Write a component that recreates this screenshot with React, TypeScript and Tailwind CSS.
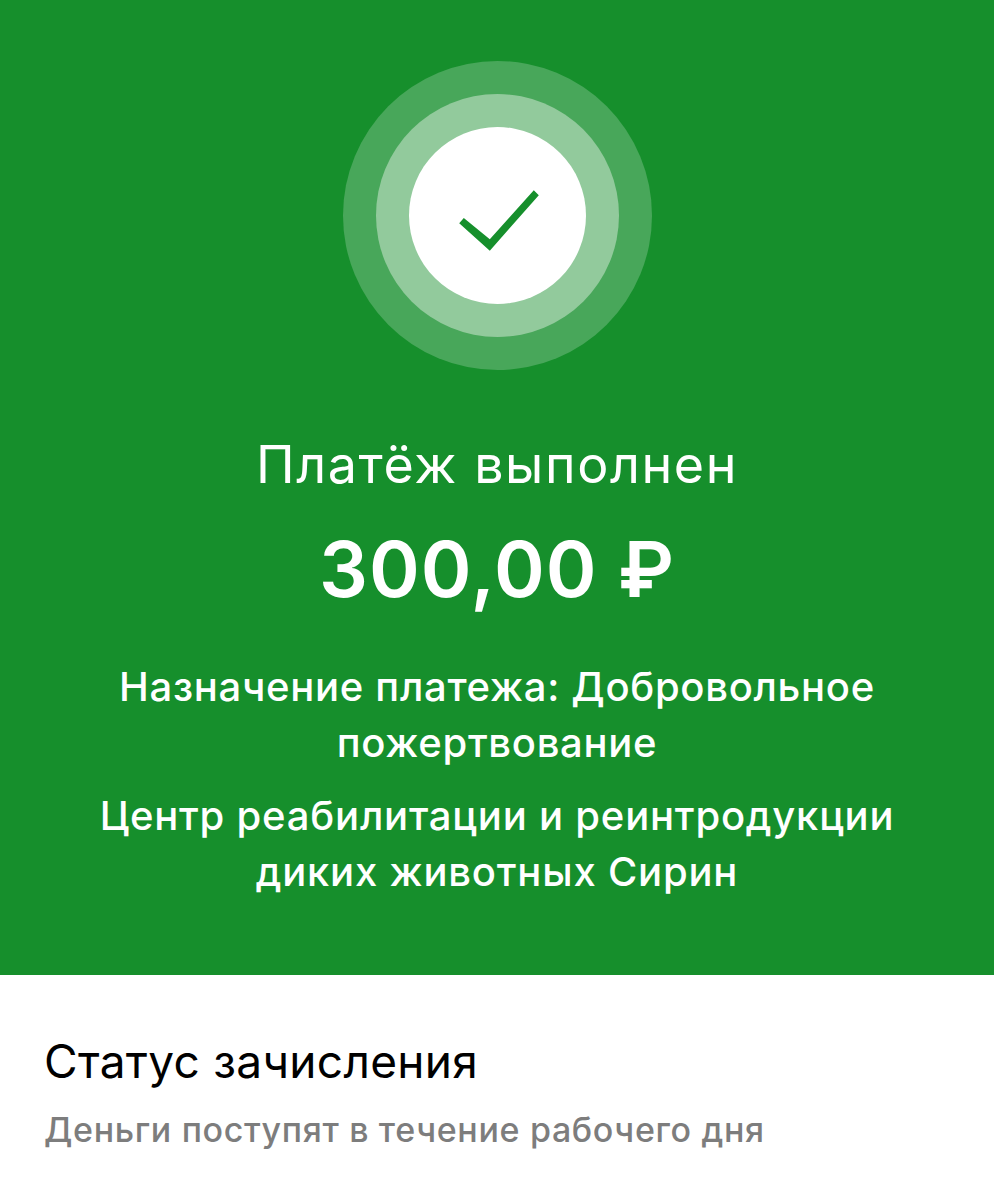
export default function App() {
  return (
    <div className="w-[994px] h-[1200px] bg-white overflow-hidden font-['Inter','Noto_Sans',sans-serif]">
      <div className="h-[975px] bg-[#168f2c] flex flex-col items-center text-white text-center">
        <div className="mt-[61px] w-[309px] h-[309px] rounded-full bg-[#48a75a] flex items-center justify-center">
          <div className="w-[243px] h-[243px] rounded-full bg-[#92ca9c] flex items-center justify-center">
            <div className="w-[177px] h-[177px] rounded-full bg-white">
              <svg width="177" height="177" viewBox="0 0 177 177"><polygon points="54.8,91 50.2,96.3 80.8,123.7 129.8,68.3 124.8,63.3 80.8,112.3" fill="#168f2c" /></svg>
            </div>
          </div>
        </div>
        <div className="mt-[60px] text-[52px] leading-[70px] tracking-[1.6px]">Платёж выполнен</div>
        <div className="mt-[24px] text-[77px] leading-[90px] font-semibold tracking-[1px]">300,00 ₽</div>
        <div className="mt-[45px] w-[800px] text-[40px] leading-[56px] font-medium tracking-[0.7px]">Назначение платежа: Добровольное пожертвование</div>
        <div className="mt-[17px] w-[830px] text-[40px] leading-[56px] font-medium tracking-[0.8px]">Центр реабилитации и реинтродукции диких животных Сирин</div>
      </div>
      <div className="px-[44px] pt-[56px]">
        <div className="text-[46px] leading-[60px] text-black tracking-[0.3px]">Статус зачисления</div>
        <div className="mt-[14px] text-[34px] leading-[50px] font-medium text-[#7d7d7d] tracking-[0.65px]">Деньги поступят в течение рабочего дня</div>
      </div>
    </div>
  );
}
